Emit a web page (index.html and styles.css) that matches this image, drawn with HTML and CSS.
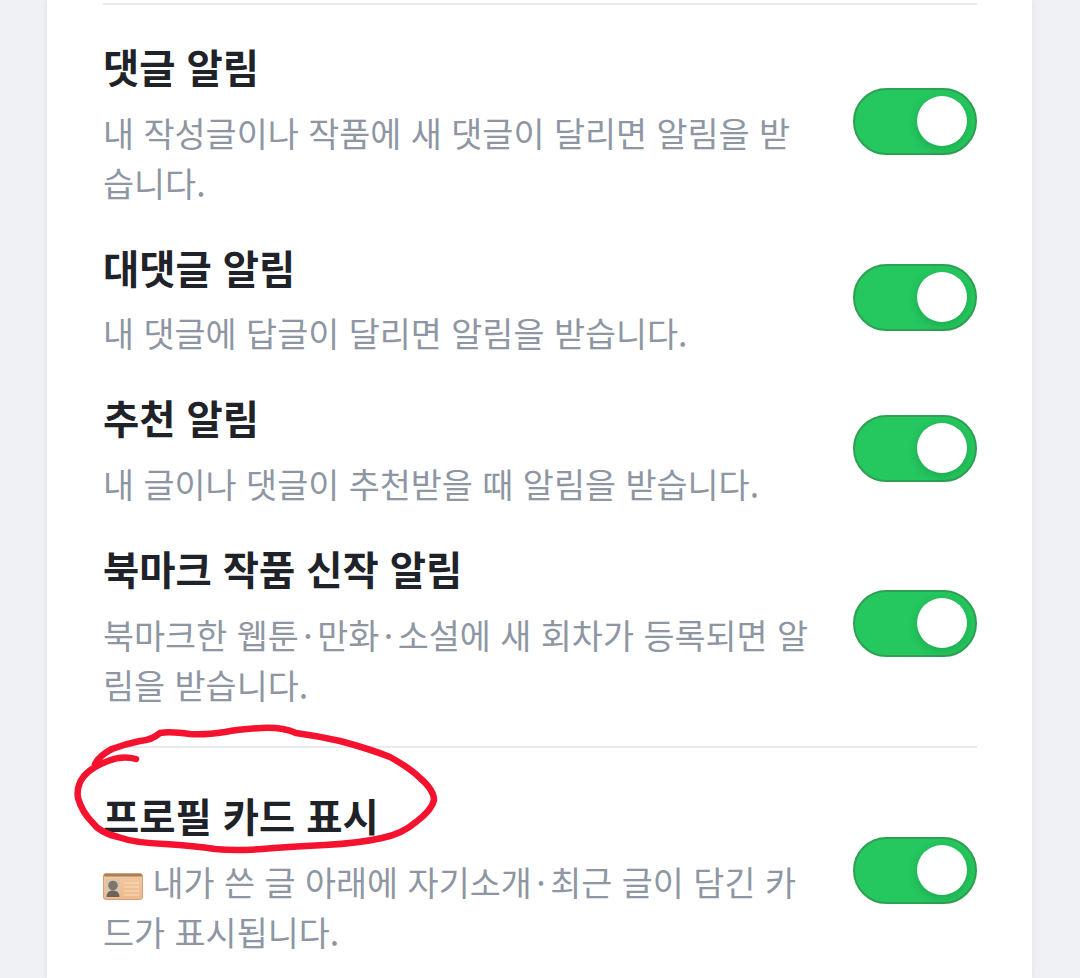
FILE: index.html
```html
<!DOCTYPE html>
<html lang="ko">
<head>
<meta charset="utf-8">
<title>알림 설정</title>
<link rel="stylesheet" href="styles.css">
</head>
<body>
<main class="card">
  <hr class="divider first">
  <section class="group">
    <div class="row">
      <div class="text">
        <h3 class="title">댓글 알림</h3>
        <p class="desc">내 작성글이나 작품에 새 댓글이 달리면 알림을 받습니다.</p>
      </div>
      <span class="toggle"><span class="knob"></span></span>
    </div>
    <div class="row">
      <div class="text">
        <h3 class="title">대댓글 알림</h3>
        <p class="desc">내 댓글에 답글이 달리면 알림을 받습니다.</p>
      </div>
      <span class="toggle"><span class="knob"></span></span>
    </div>
    <div class="row">
      <div class="text">
        <h3 class="title">추천 알림</h3>
        <p class="desc">내 글이나 댓글이 추천받을 때 알림을 받습니다.</p>
      </div>
      <span class="toggle"><span class="knob"></span></span>
    </div>
    <div class="row">
      <div class="text">
        <h3 class="title">북마크 작품 신작 알림</h3>
        <p class="desc">북마크한 웹툰<span class="dot">·</span>만화<span class="dot">·</span>소설에 새 회차가 등록되면 알림을 받습니다.</p>
      </div>
      <span class="toggle"><span class="knob"></span></span>
    </div>
  </section>
  <hr class="divider">
  <section class="group">
    <div class="row">
      <div class="text">
        <h3 class="title">프로필 카드 표시</h3>
        <p class="desc"><svg class="idcard" viewBox="0 0 40 27" aria-hidden="true">
          <defs><linearGradient id="cardfill" x1="0" y1="0" x2="0" y2="1"><stop offset="0" stop-color="#f2c8a0"/><stop offset="1" stop-color="#eeb98c"/></linearGradient></defs>
          <rect x="0.5" y="0.5" width="39" height="26" rx="2.500" fill="url(#cardfill)" stroke="#cfa27c"/>
          <rect x="1" y="1" width="38" height="2.500" rx="1.200" fill="#a97f58"/>
          <rect x="3" y="6" width="14" height="18" fill="#d9c4ae"/>
          <circle cx="10" cy="12.500" r="4.800" fill="#7d766e"/>
          <path d="M3.500 24c0-4.500 3-6.500 6.500-6.500s6.500 2 6.500 6.500z" fill="#6b645c"/>
          <path d="M21 10h15M21 14h15M21 18h15M21 22h15" stroke="#f8dcc2" stroke-width="1.100"/>
        </svg> 내가 쓴 글 아래에 자기소개<span class="dot">·</span>최근 글이 담긴 카드가 표시됩니다.</p>
      </div>
      <span class="toggle"><span class="knob"></span></span>
    </div>
  </section>
</main>
<svg class="scribble" viewBox="0 0 1080 978" aria-hidden="true">
  <path d="M136 759Q122 755 108 761Q92 767 84 776Q76 786 78 798Q82 812 92 822Q100 833 118 837Q135 843 165 844Q195 846 215 849Q235 851 262 849Q285 847 325 845Q360 843 382 838Q402 834 416 822Q432 810 434 800Q434 790 420 778Q410 768 390 757Q370 749 340 741Q318 736 296 733Q282 727 262 728Q240 729 225 732Q205 735 190 734Q170 731 160 733Q152 740 140 741Q125 744 112 749Q100 755 95 764"/>
</svg>
</body>
</html>
```
FILE: styles.css
```css
* { box-sizing: border-box; }
html, body { margin: 0; height: 978px; overflow: hidden; }
body {
  background: #eff1f5;
  font-family: "Noto Sans CJK KR", "Noto Sans", sans-serif;
  position: relative;
}
.card {
  width: 985px;
  height: 978px;
  margin-left: 47px;
  padding: 3px 55px 0 56px;
  background: #fff;
  box-shadow: 0 0 6px rgba(120, 130, 150, .15);
}
.divider {
  margin: 0;
  border: 0;
  height: 2px;
  background: #e8eaed;
}
.divider.first { margin-bottom: 36px; }
.group { display: flex; flex-direction: column; gap: 26.200px; }
.group + .divider { margin-top: 28.500px; margin-bottom: 42px; }
.row {
  display: flex;
  align-items: center;
  justify-content: space-between;
  padding-bottom: 8px;
}
.text { width: 716px; }
.title {
  margin: 0 0 16.500px;
  font-size: 39.400px;
  font-weight: 700;
  line-height: 50px;
  color: #1f2329;
}
.desc {
  margin: 0;
  font-size: 33.750px;
  font-weight: 400;
  line-height: 50px;
  color: #8e96a3;
}
.dot { padding: 0 4.500px; }
.idcard { width: 40px; height: 27px; vertical-align: -4px; }
.toggle {
  flex: none;
  display: flex;
  justify-content: flex-end;
  width: 124px;
  height: 67px;
  padding: 6px 8px;
  margin-bottom: 5px;
  border-radius: 34px;
  background: #25c75f;
  border: 2px solid #2f9f52;
}
.knob {
  width: 50px;
  height: 50px;
  border-radius: 50%;
  background: #fff;
  box-shadow: 0 3px 10px rgba(0, 60, 20, .22);
}
.scribble {
  position: absolute;
  inset: 0;
  width: 1080px;
  height: 978px;
  pointer-events: none;
}
.scribble path {
  fill: none;
  stroke: #f5122e;
  stroke-width: 6.500;
  stroke-linecap: round;
  stroke-linejoin: round;
}
```
